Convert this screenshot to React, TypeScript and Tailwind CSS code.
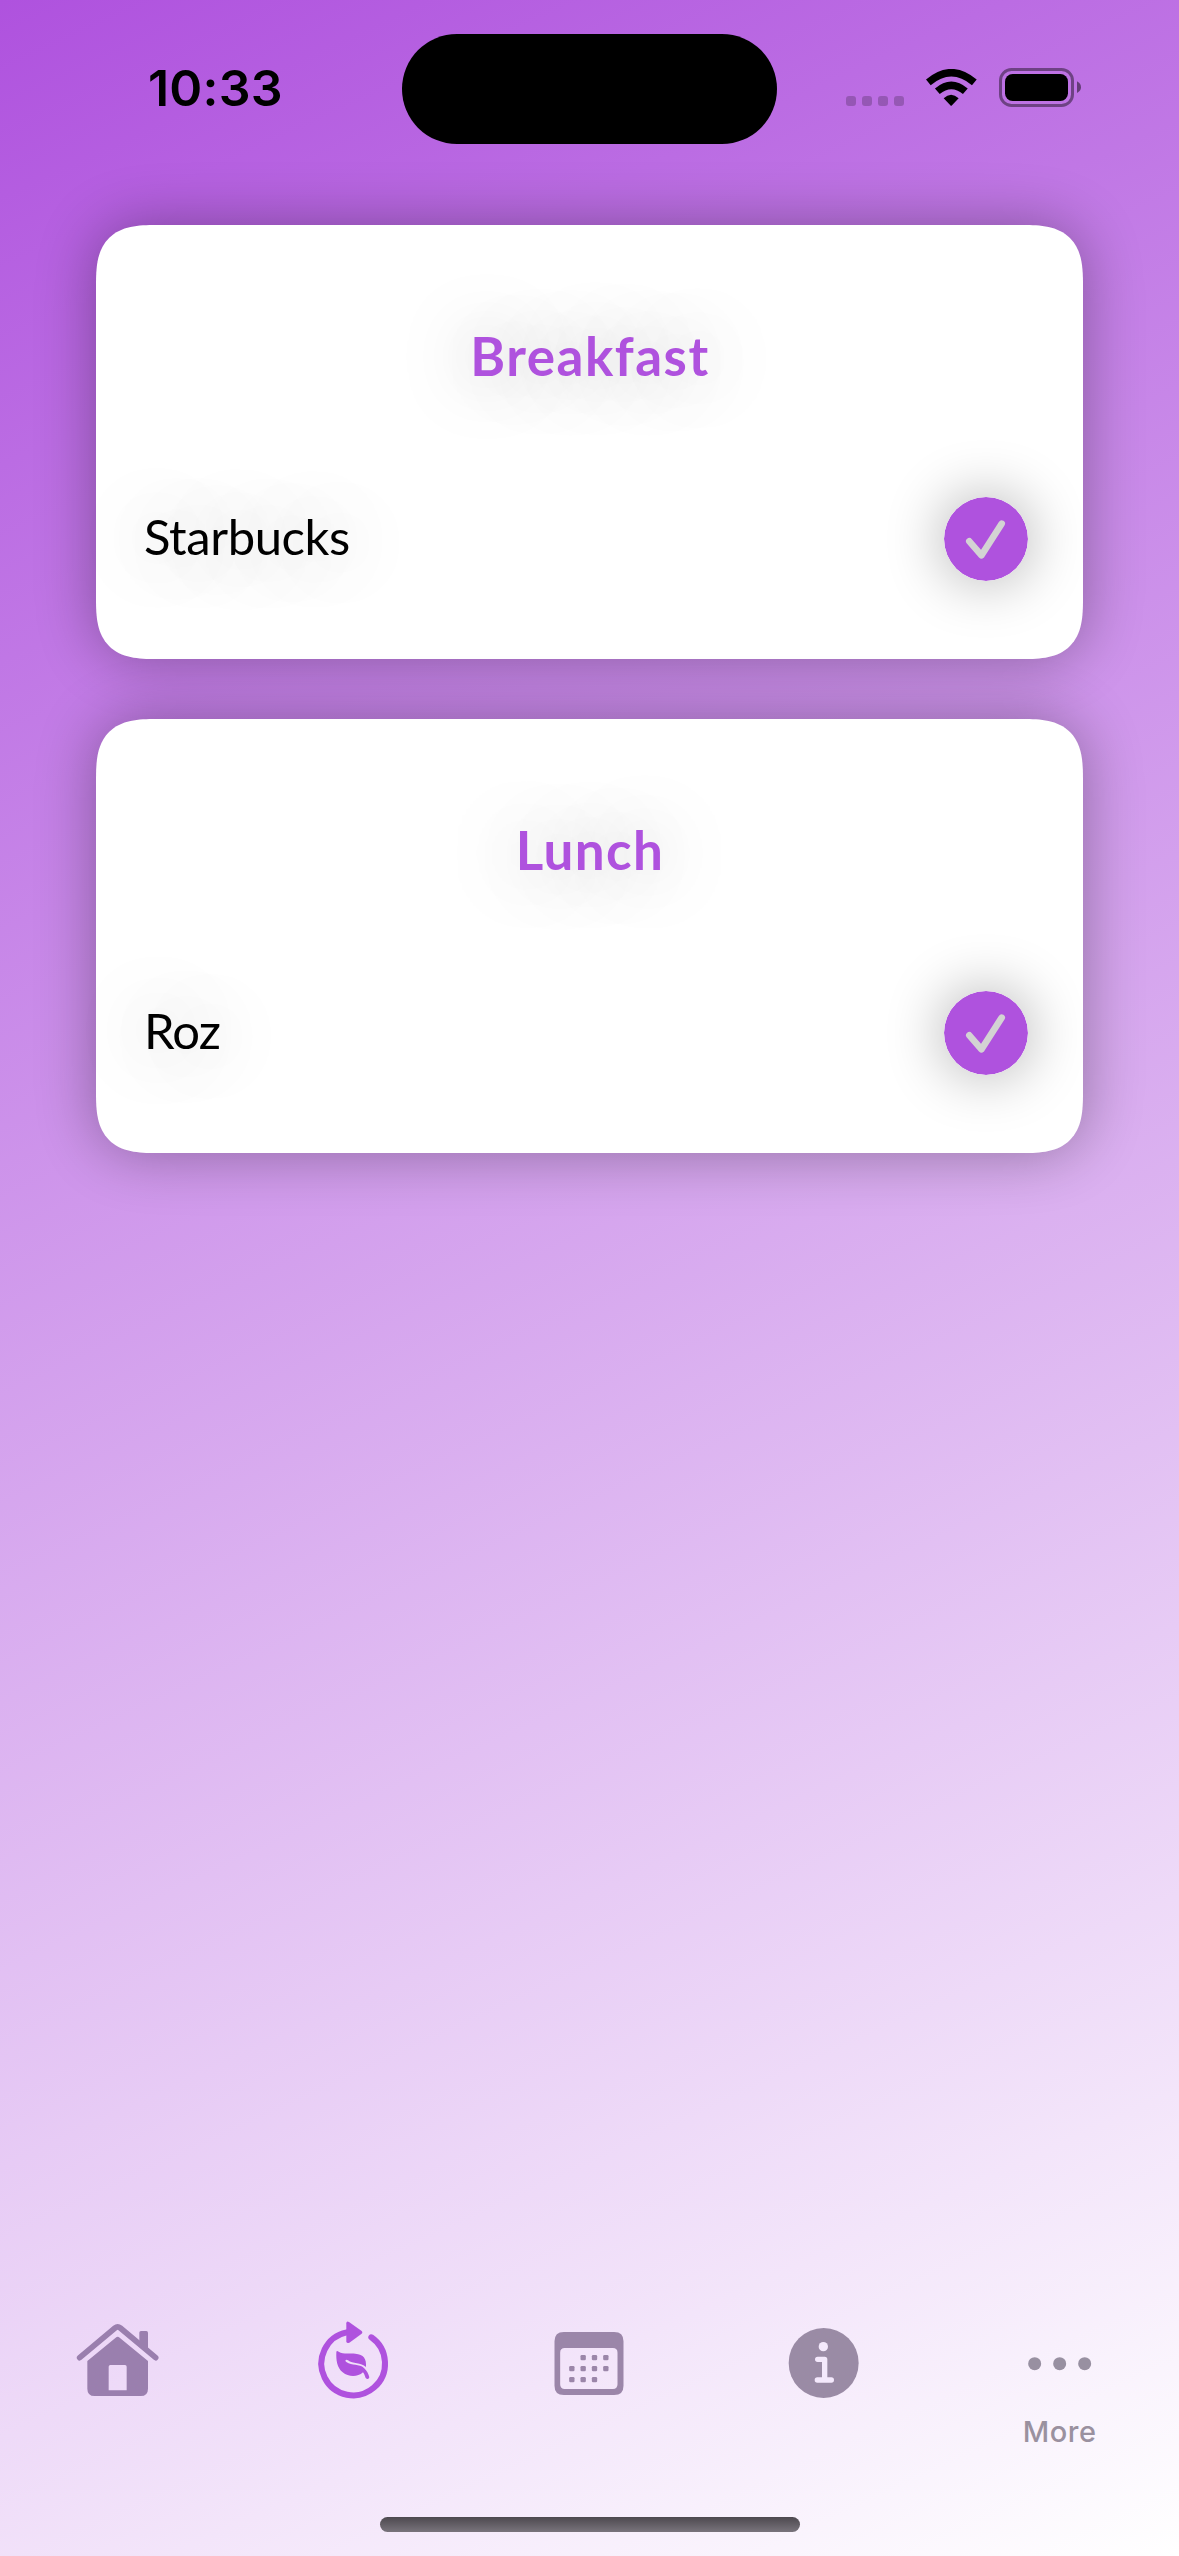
import type { ReactNode } from "react";

const meals = [
  { title: "Breakfast", item: "Starbucks", titleSpacing: "tracking-[1.5px]", itemSpacing: "tracking-[-0.4px]" },
  { title: "Lunch", item: "Roz", titleSpacing: "tracking-[1.4px]", itemSpacing: "tracking-[-0.8px]" },
];

function StatusBar() {
  return (
    <header className="grid h-[178px] grid-cols-[402px_375px_402px] items-start text-black">
      <time className="pt-[63px] pl-[148px] font-[Inter,sans-serif] text-[50px] leading-[50px] font-semibold tracking-[0.2px]">
        10:33
      </time>
      <div className="mt-[34px] h-[110px] rounded-full bg-black" />
      <div className="flex pt-[68px] pl-[69px]">
        <div className="mt-7 flex gap-1.5 opacity-20">
          {[0, 1, 2, 3].map((dot) => (
            <span key={dot} className="size-2.5 rounded-[3px] bg-black" />
          ))}
        </div>
        <svg className="mt-px ml-[22px] h-[38px] w-[51px]" viewBox="499 147 153 114">
          <g fill="none" stroke="#000" strokeWidth="22">
            <path d="M506 187 Q575 129 644 187" />
            <path d="M533 214 Q575 178 617 214" />
          </g>
          <path d="M552 235 Q574 213 597 235 L577 256 Q574.500 259 572 256Z" />
        </svg>
        <svg className="ml-[22px] h-[39px] w-[82px]" viewBox="717 144 246 117">
          <rect x="721.500" y="148.500" width="216" height="108" rx="33" fill="none" stroke="#000" strokeWidth="9" opacity=".42" />
          <rect x="735" y="162" width="189" height="81" rx="23" />
          <path d="M951 184 Q963 190 963 202 Q963 213 951 219Z" opacity=".48" />
        </svg>
      </div>
    </header>
  );
}

function CheckBadge() {
  return (
    <svg className="size-[84px] rounded-full shadow-[0_0_60px_rgba(0,0,0,0.33)]" viewBox="0 0 252 252">
      <circle cx="126" cy="126" r="126" fill="#af52de" />
      <path d="M76 133 L112.500 175 L173 80" fill="none" stroke="#d3d3d3" strokeWidth="20" strokeLinecap="round" strokeLinejoin="round" />
    </svg>
  );
}

function MealCard({ title, item, titleSpacing, itemSpacing }: (typeof meals)[number]) {
  return (
    <section className="h-[434px] rounded-[50px] bg-white pt-[104px] pr-[55px] pl-[48px] shadow-[0_0_60px_rgba(0,0,0,0.33)] supports-[corner-shape:squircle]:rounded-[60px] supports-[corner-shape:squircle]:[corner-shape:superellipse(1.5)]">
      <h2 className={"pl-2 text-center text-[53px] leading-none font-bold text-[#af52de] [text-shadow:0_0_70px_rgba(0,0,0,0.36)] " + titleSpacing}>
        {title}
      </h2>
      <div className="mt-[115px] flex h-[84px] items-center justify-between">
        <span className={"pb-1.5 text-[49px] leading-none text-black [text-shadow:0_0_70px_rgba(0,0,0,0.36)] " + itemSpacing}>{item}</span>
        <CheckBadge />
      </div>
    </section>
  );
}

function Tab({ viewBox, children, label }: { viewBox: string; children: ReactNode; label?: string }) {
  return (
    <div className="flex flex-col items-center">
      <svg className="size-[120px]" viewBox={viewBox}>
        {children}
      </svg>
      {label && (
        <span className="-mt-[3px] pr-[3px] font-[Inter,sans-serif] text-[29px] leading-[29px] font-medium tracking-[0.5px] text-[#9a919f]">{label}</span>
      )}
    </div>
  );
}

function TabBar() {
  return (
    <nav className="grid h-[217px] grid-cols-5">
      <Tab viewBox="-6 0 360 360">
        <g fill="#9a7fae">
          <path d="M82 183 L167 113 Q173 108 179 113 L264 183 V266 Q264 288 242 288 H104 Q82 288 82 266Z M151 195 Q146 195 146 200 V271 H200 V200 Q200 195 195 195Z" fillRule="evenodd" />
          <path d="M238 125 V98 Q238 93 243 93 H259 Q264 93 264 98 V150Z" />
        </g>
        <path d="M59 173 L165 84 Q173 77 181 84 L287 173" fill="none" stroke="#9a7fae" strokeWidth="17" strokeLinecap="round" />
      </Tab>
      <Tab viewBox="11 0 360 360">
        <path d="M169 97 A95.500 95.500 0 1 0 243 112" fill="none" stroke="#af52de" strokeWidth="18" strokeLinecap="round" />
        <g fill="#af52de">
          <path d="M168 70 Q168 62 176 66 L213 92 Q219 97 213 102 L177 128 Q168 132 168 124Z" />
          <path d="M138 156 Q139 150 145 155 C159 164 177 159 195 161 C220 163 229 176 227 201 C212 187 187 192 173 181 C167 176 162 183 168 186 C185 199 207 190 221 204 C230 213 235 222 237 232 Q236 238 230 237 Q225 236 224 229 Q222 221 218 217 C202 232 175 232 157 217 C140 203 137 180 138 156Z" />
        </g>
      </Tab>
      <Tab viewBox="-1.500 0 360 360">
        <g fill="#9b86a9">
          <path fillRule="evenodd" d="M103 96 H254 Q282 96 282 124 V257 Q282 285 254 285 H103 Q75 285 75 257 V124 Q75 96 103 96Z M106 144 Q92 144 92 158 V253 Q92 267 106 267 H250 Q264 267 264 253 V158 Q264 144 250 144Z" />
          {[
            [153, 165], [187, 165], [221, 165],
            [119, 198], [153, 198], [187, 198], [221, 198],
            [119, 231], [153, 231], [187, 231],
          ].map(([x, y]) => (
            <rect key={`${x}-${y}`} x={x} y={y} width="16" height="16" rx="4" />
          ))}
        </g>
      </Tab>
      <Tab viewBox="-14 0 360 360">
        <circle cx="162" cy="189" r="105" fill="#9a8ba5" />
        <circle cx="161" cy="140" r="14" fill="#f4e9fc" />
        <path d="M144 178 H165 V240 M143 240 H185" fill="none" stroke="#f4e9fc" strokeWidth="16" strokeLinecap="round" strokeLinejoin="round" />
      </Tab>
      <Tab viewBox="33 -90 360 360" label="More">
        <g fill="#9890a1">
          <circle cx="134" cy="101" r="19.500" />
          <circle cx="209" cy="101" r="19.500" />
          <circle cx="284" cy="101" r="19.500" />
        </g>
      </Tab>
    </nav>
  );
}

export default function App() {
  return (
    <div className="flex h-[2556px] w-[1179px] flex-col overflow-hidden bg-[linear-gradient(155.24deg,#af52de,#ffffff)] font-[Lato,sans-serif]">
      <StatusBar />
      <main className="flex flex-1 flex-col gap-[60px] px-24 pt-[47px]">
        {meals.map((meal) => (
          <MealCard key={meal.title} {...meal} />
        ))}
      </main>
      <TabBar />
      <footer className="flex h-[39px] justify-center">
        <div className="h-[15px] w-[420px] rounded-full bg-linear-to-b from-[#4d494f] to-[#79747c]" />
      </footer>
    </div>
  );
}
